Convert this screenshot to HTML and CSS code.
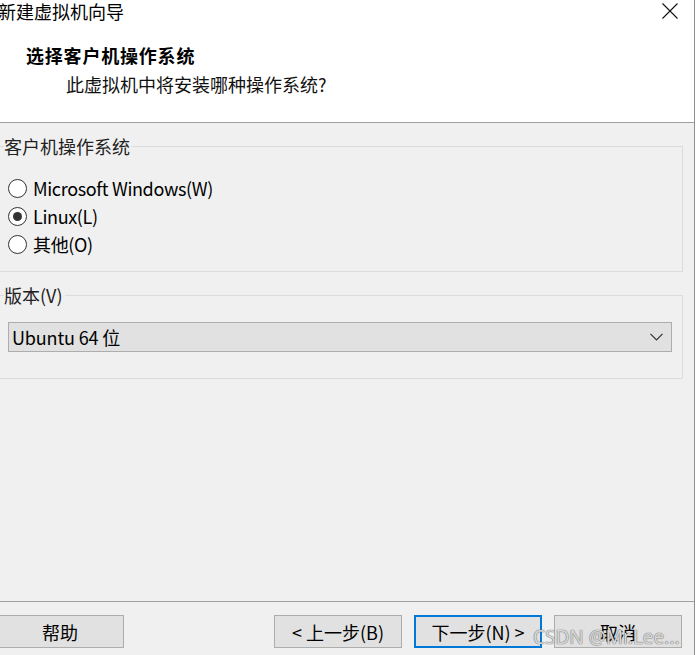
FILE: index.html
```html
<!DOCTYPE html>
<html lang="zh-CN">
<head>
<meta charset="utf-8">
<title>新建虚拟机向导</title>
<link rel="stylesheet" href="styles.css">
</head>
<body>
<div class="window">
  <header class="header">
    <div class="titlebar">
      <span class="title">新建虚拟机向导</span>
      <svg class="close" width="16" height="16" viewBox="0 0 16 16"><path d="M0.5 0.5 L15.5 15.5 M15.5 0.5 L0.5 15.5" stroke="#111" stroke-width="1.1" fill="none"/></svg>
    </div>
    <h1 class="heading">选择客户机操作系统</h1>
    <p class="subtitle">此虚拟机中将安装哪种操作系统?</p>
  </header>
  <main class="main">
    <fieldset class="group group-os">
      <legend class="legend">客户机操作系统</legend>
      <div class="radio-row"><span class="radio"></span><span class="radio-label">Microsoft Windows(W)</span></div>
      <div class="radio-row"><span class="radio checked"></span><span class="radio-label">Linux(L)</span></div>
      <div class="radio-row"><span class="radio"></span><span class="radio-label">其他(O)</span></div>
    </fieldset>
    <fieldset class="group group-ver">
      <legend class="legend">版本(V)</legend>
      <div class="combo">
        <span class="combo-text">Ubuntu 64 位</span>
        <svg class="chevron" width="13" height="8" viewBox="0 0 13 8"><polyline points="0.5,0.8 6.5,6.8 12.5,0.8" stroke="#333" stroke-width="1.2" fill="none"/></svg>
      </div>
    </fieldset>
  </main>
  <footer class="footer">
    <button class="btn btn-help">帮助</button>
    <div class="spacer"></div>
    <div class="btn-group">
      <button class="btn">&lt; 上一步(B)</button>
      <button class="btn btn-default">下一步(N) &gt;</button>
      <button class="btn">取消</button>
    </div>
    <div class="watermark">CSDN @Mr.Lee...</div>
  </footer>
</div>
</body>
</html>
```
FILE: styles.css
```css
html, body {
  margin: 0;
  padding: 0;
  background: #ffffff;
  overflow: hidden;
}
body {
  font-family: "Noto Sans CJK SC", "Noto Sans", sans-serif;
  font-size: 18px;
  color: #000;
}
.window {
  width: 695px;
  height: 655px;
  box-sizing: border-box;
  border-right: 1px solid #8f8f8f;
  background: #f0f0f0;
  display: flex;
  flex-direction: column;
  overflow: hidden;
}
.header {
  background: #ffffff;
  height: 123px;
  box-sizing: border-box;
  border-bottom: 1px solid #a0a0a0;
  flex: none;
}
.titlebar {
  display: flex;
  align-items: center;
  justify-content: space-between;
  height: 22px;
  padding-right: 16px;
}
.title {
  margin-left: -2px;
  line-height: 22px;
  font-size: 18px;
}
.close {
  display: block;
}
.heading {
  margin: 21px 0 0 26px;
  font-size: 18px;
  font-weight: bold;
  letter-spacing: 0.8px;
  line-height: 24px;
}
.subtitle {
  margin: 5px 0 0 66px;
  font-size: 18px;
  line-height: 24px;
  color: #111;
}
.main {
  flex: 1;
  padding-top: 13px;
}
.group {
  margin: 0 11px 0 -8px;
  border: 1px solid #dcdcdc;
  padding: 18px 10px 13px 11px;
  min-width: 0;
}
.group-ver {
  margin-top: 13px;
  padding-top: 17px;
  padding-bottom: 26px;
}
.legend {
  padding: 0 2px 0 0;
  line-height: 20px;
  font-size: 18px;
  color: #222;
}
.radio-row {
  display: flex;
  align-items: center;
  height: 28px;
  margin-left: 4px;
}
.radio {
  width: 17px;
  height: 17px;
  border: 1px solid #333;
  border-radius: 50%;
  background: #fff;
  display: flex;
  align-items: center;
  justify-content: center;
  flex: none;
}
.radio.checked::after {
  content: "";
  width: 9px;
  height: 9px;
  border-radius: 50%;
  background: #333;
}
.radio-label {
  margin-left: 6px;
  line-height: 28px;
  letter-spacing: -0.35px;
}
.combo {
  margin-left: 4px;
  height: 30px;
  box-sizing: border-box;
  border: 1px solid #adadad;
  background: #e1e1e1;
  display: flex;
  align-items: center;
  justify-content: space-between;
  padding: 0 8px 0 3px;
}
.combo-text {
  line-height: 28px;
  letter-spacing: -0.15px;
}
.chevron {
  display: block;
}
.footer {
  flex: none;
  height: 54px;
  box-sizing: border-box;
  border-top: 1px solid #a0a0a0;
  padding: 13px 12px 0 0;
  display: flex;
  align-items: flex-start;
  position: relative;
}
.spacer {
  flex: 1;
}
.btn-group {
  display: flex;
  gap: 12px;
}
.btn {
  width: 128px;
  height: 33px;
  box-sizing: border-box;
  border: 1px solid #adadad;
  background: #e1e1e1;
  font-family: "Noto Sans CJK SC", "Noto Sans", sans-serif;
  font-size: 18px;
  color: #000;
  padding: 0;
  line-height: 30px;
}
.btn-help {
  margin-left: -4px;
}
.btn-default {
  border: 2px solid #0078d7;
}
.watermark {
  position: absolute;
  left: 533px;
  top: 22px;
  font-family: "Noto Sans", sans-serif;
  font-size: 19px;
  line-height: 26px;
  color: rgba(235, 235, 235, 0.85);
  text-shadow: 0 0 1px #6a6a6a, 0 0 1px #6a6a6a;
  white-space: nowrap;
  pointer-events: none;
}
```
